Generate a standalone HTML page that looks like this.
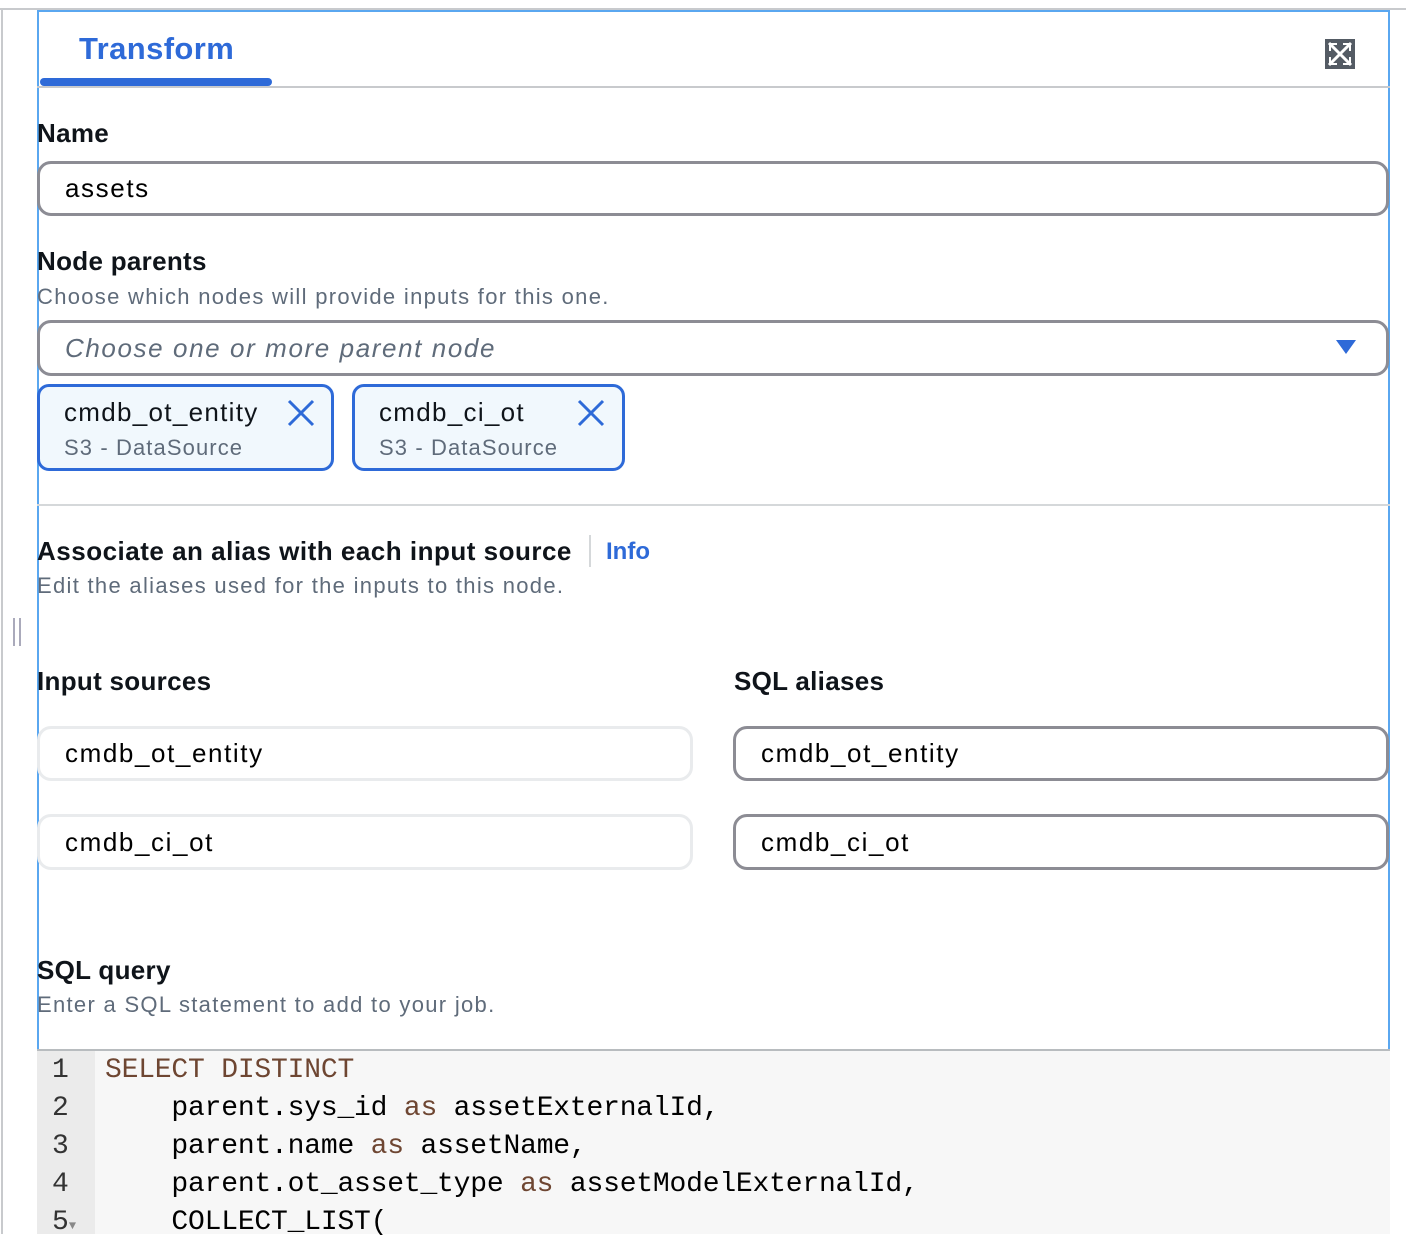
<!DOCTYPE html>
<html><head><meta charset="utf-8"><style>
*{box-sizing:border-box;margin:0;padding:0}
body{width:1406px;height:1234px;background:#fff;position:relative;overflow:hidden;font-family:"Liberation Sans",Arial,sans-serif;color:#000}
.a{position:absolute;white-space:nowrap}
.lbl{font-size:26px;font-weight:bold;color:#0f141a;letter-spacing:0.3px}
.desc{font-size:22px;color:#5f6b7a;letter-spacing:1.3px}
.inp{position:absolute;border:3px solid #8c8c94;border-radius:14px;background:#fff;font-size:26px;letter-spacing:1.6px;padding-left:25px;display:flex;align-items:center;white-space:nowrap}
.ro{border-color:#e9ebed}
.tok{position:absolute;border:3px solid #2e6ad8;border-radius:12px;background:#f1f8fd;height:87px}
.tok .t{position:absolute;left:24px;top:10px;font-size:26px;letter-spacing:1.3px;color:#0f141a;white-space:nowrap}
.tok .s{position:absolute;left:24px;top:48px;font-size:22px;letter-spacing:1.1px;color:#5f6b7a;white-space:nowrap}
.code{font-family:"Liberation Mono",monospace;font-size:28px;line-height:38px;white-space:pre}
.kw{color:#6e4632}
</style></head><body>
<div class="a" style="left:0;top:8px;width:1406px;height:2px;background:#c8cacd"></div>
<div class="a" style="left:1px;top:8px;width:2px;height:1226px;background:#c8cacd"></div>
<div class="a" style="left:37px;top:10px;width:1353px;height:1041px;border:2px solid #5aa7f0;border-bottom:none"></div>
<div class="a" style="left:37px;top:86px;width:1353px;height:2px;background:#c8cacd"></div>
<div class="a" style="left:37px;top:504px;width:1353px;height:2px;background:#d5d8da"></div>
<div class="a" style="left:79px;top:31px;font-size:31px;font-weight:bold;color:#2e6ad8;letter-spacing:0.4px">Transform</div>
<div class="a" style="left:40px;top:78px;width:232px;height:8px;border-radius:4px;background:#2e6ad8"></div>
<svg class="a" style="left:1325px;top:39px" width="30" height="30" viewBox="0 0 30 30"><rect width="30" height="30" fill="#545b64"/><path d="M4 4L26 26M26 4L4 26" stroke="#fff" stroke-width="3"/><path d="M4 4h8v2H6v6H4zM26 4v8h-2V6h-6V4zM4 26v-8h2v6h6v2zM26 26h-8v-2h6v-6h2z" fill="#fff"/></svg>
<div class="a lbl" style="left:37px;top:118px">Name</div>
<div class="inp" style="left:37px;top:161px;width:1352px;height:55px">assets</div>
<div class="a lbl" style="left:37px;top:246px">Node parents</div>
<div class="a desc" style="left:37px;top:284px">Choose which nodes will provide inputs for this one.</div>
<div class="inp" style="left:37px;top:320px;width:1352px;height:56px;font-style:italic;color:#5f6b7a">Choose one or more parent node</div>
<svg class="a" style="left:1336px;top:340px" width="20" height="16"><path d="M0 0h20L10 14z" fill="#2e6ad8"/></svg>
<div class="tok" style="left:37px;top:384px;width:297px"><div class="t">cmdb_ot_entity</div><div class="s">S3 - DataSource</div><svg class="a" style="left:247px;top:12px" width="28" height="28"><path d="M2 2L26 26M26 2L2 26" stroke="#2e6ad8" stroke-width="3"/></svg></div>
<div class="tok" style="left:352px;top:384px;width:273px"><div class="t">cmdb_ci_ot</div><div class="s">S3 - DataSource</div><svg class="a" style="left:222px;top:12px" width="28" height="28"><path d="M2 2L26 26M26 2L2 26" stroke="#2e6ad8" stroke-width="3"/></svg></div>
<div class="a lbl" style="left:37px;top:536px;letter-spacing:0.5px">Associate an alias with each input source</div>
<div class="a" style="left:589px;top:535px;width:2px;height:32px;background:#d5d8da"></div>
<div class="a" style="left:606px;top:538px;font-size:24px;font-weight:bold;color:#2e6ad8">Info</div>
<div class="a desc" style="left:37px;top:573px">Edit the aliases used for the inputs to this node.</div>
<div class="a" style="left:13px;top:618px;width:2px;height:28px;background:#aab"></div>
<div class="a" style="left:19px;top:618px;width:2px;height:28px;background:#aab"></div>
<div class="a lbl" style="left:37px;top:666px">Input sources</div>
<div class="a lbl" style="left:734px;top:666px">SQL aliases</div>
<div class="inp ro" style="left:37px;top:726px;width:656px;height:55px">cmdb_ot_entity</div>
<div class="inp ro" style="left:37px;top:814px;width:656px;height:56px">cmdb_ci_ot</div>
<div class="inp" style="left:733px;top:726px;width:656px;height:55px">cmdb_ot_entity</div>
<div class="inp" style="left:733px;top:814px;width:656px;height:56px">cmdb_ci_ot</div>
<div class="a lbl" style="left:37px;top:955px">SQL query</div>
<div class="a desc" style="left:37px;top:992px">Enter a SQL statement to add to your job.</div>
<div class="a" style="left:37px;top:1049px;width:1353px;height:2px;background:#b8bcbf"></div>
<div class="a" style="left:37px;top:1051px;width:1353px;height:183px;background:#f7f7f7"></div>
<div class="a" style="left:37px;top:1051px;width:58px;height:183px;background:#ebebeb"></div>
<div class="a code" style="left:52px;top:1052px;color:#333">1
2
3
4
5<span style="font-size:12px;color:#888">▼</span></div>
<div class="a code" style="left:105px;top:1052px;color:#000;letter-spacing:-0.2px"><span class="kw">SELECT DISTINCT</span>
    parent.sys_id <span class="kw">as</span> assetExternalId,
    parent.name <span class="kw">as</span> assetName,
    parent.ot_asset_type <span class="kw">as</span> assetModelExternalId,
    COLLECT_LIST(</div>
</body></html>
